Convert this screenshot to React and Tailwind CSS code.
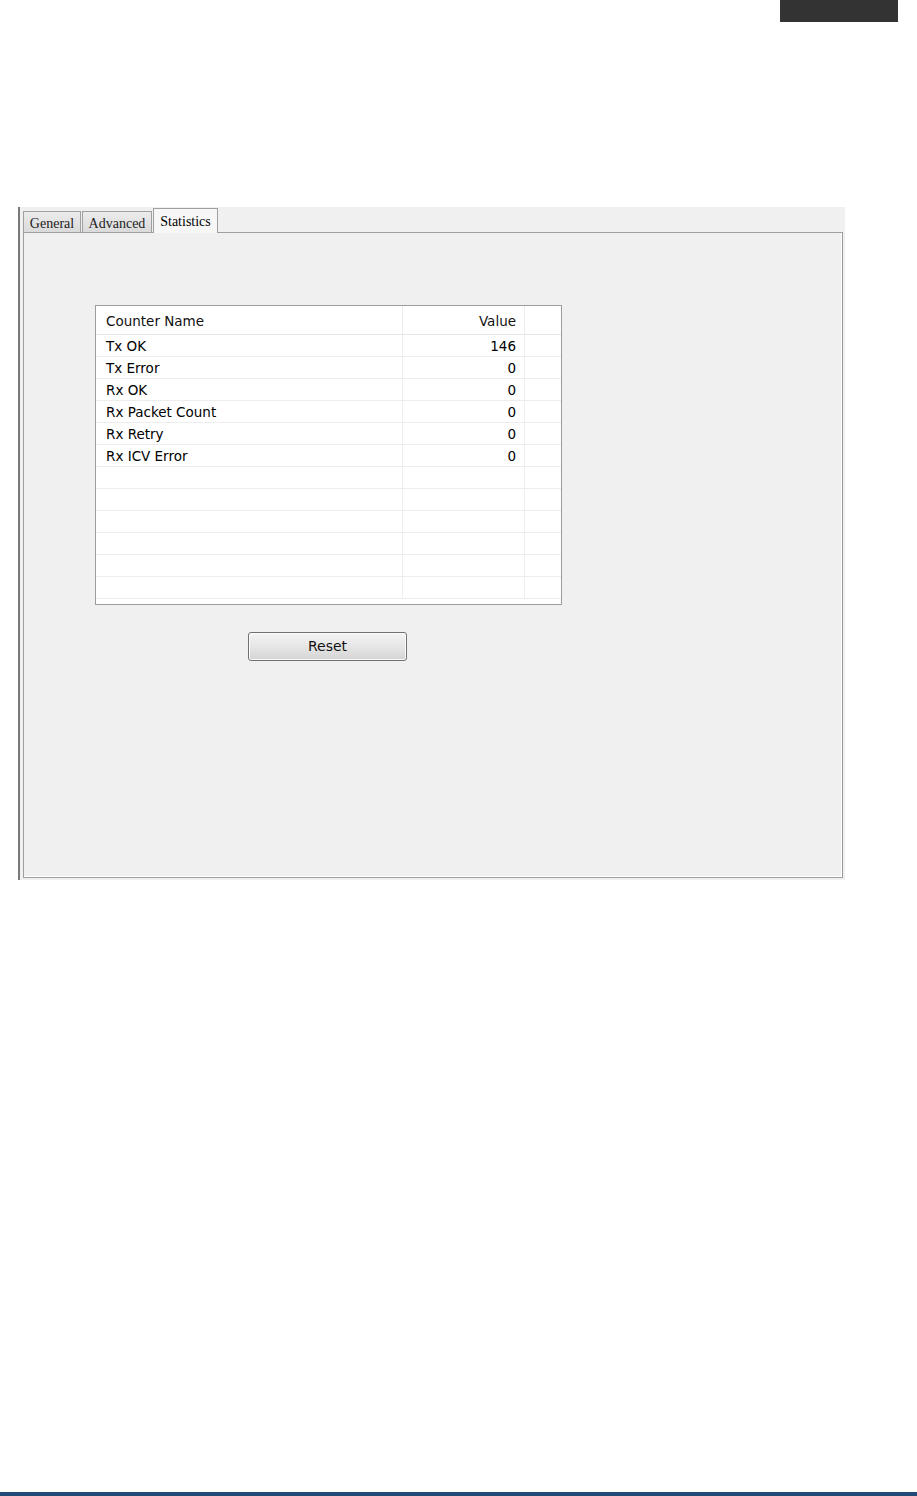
import React from 'react';

const rows = [
  { name: 'Tx OK', value: '146' },
  { name: 'Tx Error', value: '0' },
  { name: 'Rx OK', value: '0' },
  { name: 'Rx Packet Count', value: '0' },
  { name: 'Rx Retry', value: '0' },
  { name: 'Rx ICV Error', value: '0' },
  { name: '', value: '' },
  { name: '', value: '' },
  { name: '', value: '' },
  { name: '', value: '' },
  { name: '', value: '' },
  { name: '', value: '' },
];

const Tab = ({ label, active, width }) => (
  <div
    className={
      active
        ? 'h-[25px] pt-[2px] border border-b-0 border-[#a0a0a0] bg-[#f7f7f7] text-[14px] text-black text-center -mb-px relative z-10'
        : 'h-[21px] pt-[1px] border border-b-0 border-[#a0a0a0] bg-gradient-to-b from-[#ececec] to-[#dadada] text-[14px] text-[#222] text-center'
    }
    style={{ fontFamily: '"Liberation Serif", serif', width }}
  >
    {label}
  </div>
);

export default function App() {
  return (
    <div className="w-[917px] h-[1496px] bg-white flex flex-col">
      <div className="flex justify-end pr-[19px]">
        <div className="w-[118px] h-[22px] bg-[#333333]" />
      </div>

      <div className="mt-[185px] ml-[18px] w-[827px] h-[673px] flex">
        <div className="w-[2px] bg-[#7a7a7a]" />
        <div className="flex-1 bg-[#f0f0f0] flex flex-col pl-[3px] pr-[2px]">
          {/* Tab strip */}
          <div className="h-[25px] flex items-end gap-[1px]">
            <Tab label="General" width="58px" />
            <Tab label="Advanced" width="70px" />
            <Tab label="Statistics" width="65px" active />
          </div>

          {/* Tab page */}
          <div className="flex-1 border border-[#a0a0a0] border-r-[#9a9a9a] bg-[#f0f0f0] shadow-[inset_-1px_-1px_0_#ffffff] pt-[72px] pl-[71px]">
            <div
              className="w-[467px] h-[300px] border border-[#9c9c9c] bg-white overflow-hidden"
              style={{ fontFamily: '"DejaVu Sans", sans-serif' }}
            >
              <div className="h-[29px] flex border-b border-[#e6e6e6] text-[13.5px] text-[#111]">
                <div className="w-[307px] border-r border-[#ececec] pl-[10px] pt-[3px] flex items-center">Counter Name</div>
                <div className="w-[122px] border-r border-[#ececec] pr-[8px] pt-[3px] flex items-center justify-end">Value</div>
                <div className="flex-1" />
              </div>
              {rows.map((r, i) => (
                <div key={i} className="h-[22px] flex border-b border-[#ededed] text-[13.5px] text-black">
                  <div className="w-[307px] border-r border-[#efefef] pl-[10px] pt-[2px] flex items-center">{r.name}</div>
                  <div className="w-[122px] border-r border-[#efefef] pr-[8px] pt-[2px] flex items-center justify-end">{r.value}</div>
                  <div className="flex-1" />
                </div>
              ))}
            </div>

            <div className="mt-[27px] ml-[153px]">
              <button
                className="w-[159px] h-[29px] rounded-[3px] border border-[#707070] bg-gradient-to-b from-[#f4f4f4] via-[#e6e6e6] to-[#d4d4d4] shadow-[inset_0_0_0_1px_#fbfbfb] text-[14px] text-[#111]"
                style={{ fontFamily: '"DejaVu Sans", sans-serif' }}
              >
                Reset
              </button>
            </div>
          </div>
          <div className="h-[2px]" />
        </div>
      </div>

      <div className="mt-auto h-[4px] bg-[#1f4a78]" />
    </div>
  );
}
